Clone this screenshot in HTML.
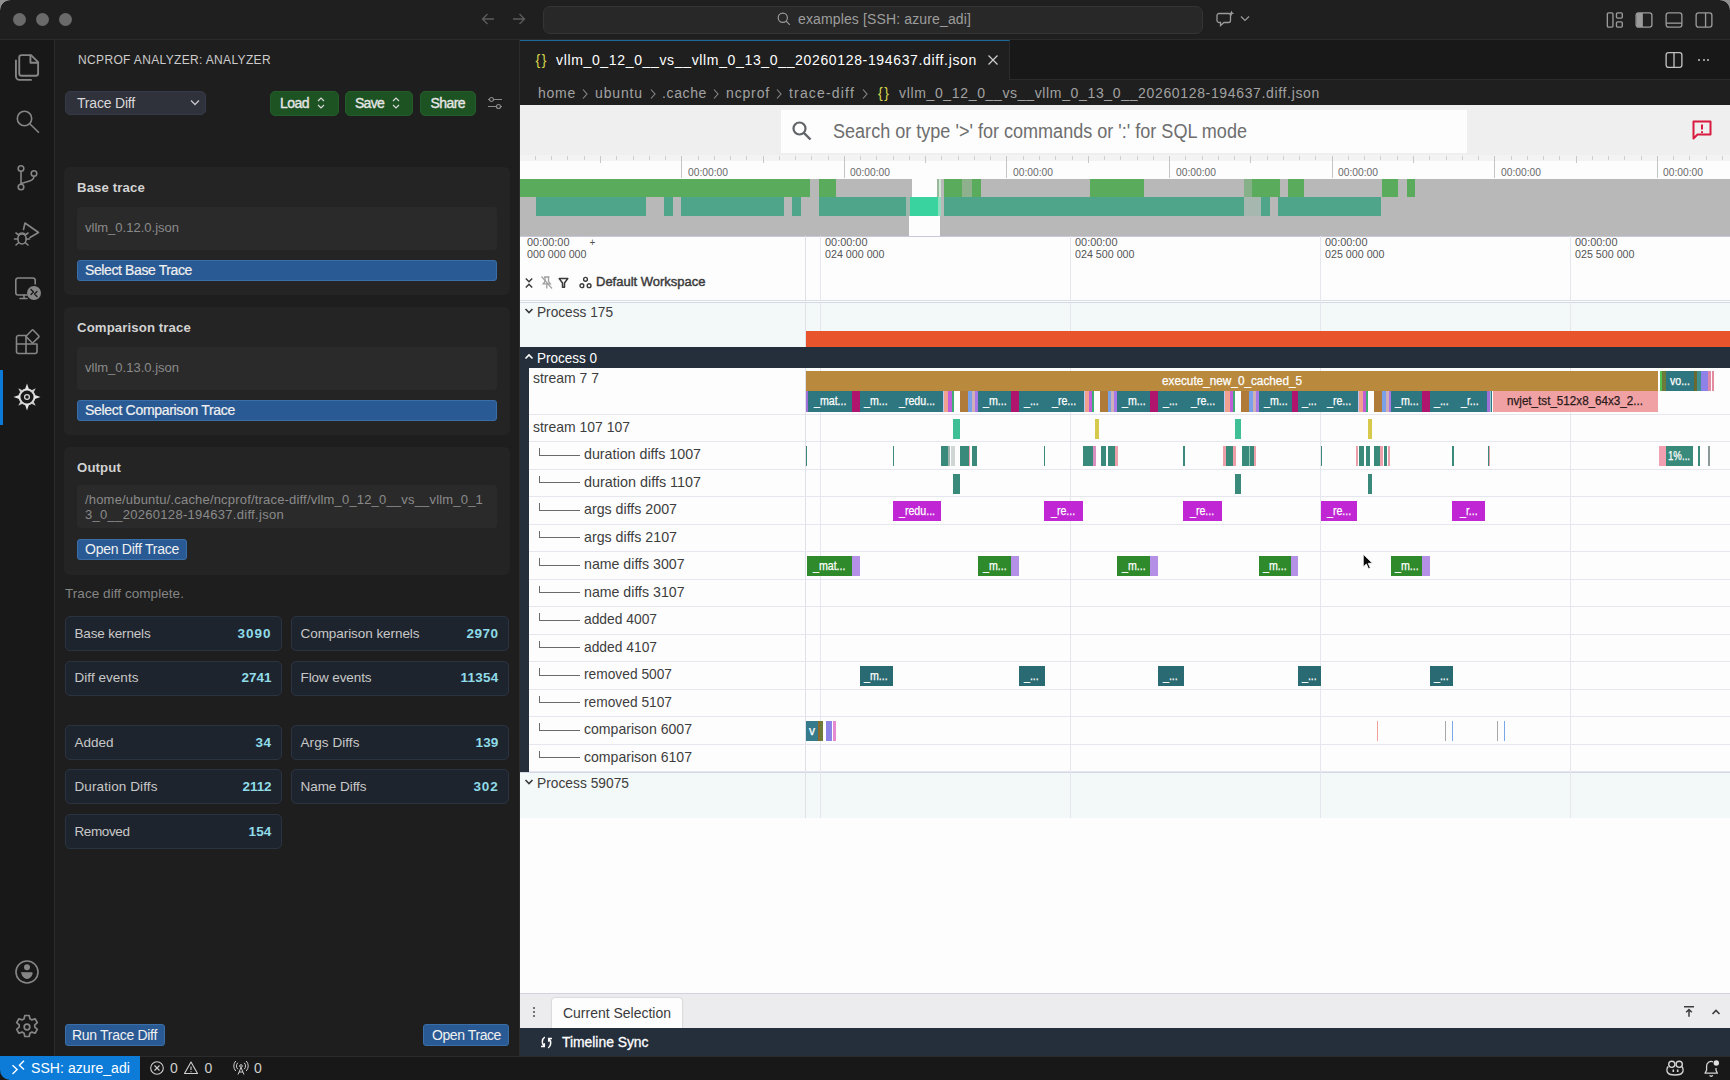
<!DOCTYPE html>
<html lang="en"><head><meta charset="utf-8"><title>ncprof analyzer - trace diff</title><style>
html,body{margin:0;padding:0}
body{width:1730px;height:1080px;overflow:hidden;position:relative;background:#1f1f1f;font-family:"Liberation Sans",sans-serif;}
.r{position:absolute;box-sizing:border-box}
.t{position:absolute;white-space:pre;display:block}
</style></head><body>
<div class="r " style="left:0px;top:0px;width:1730px;height:1080px;background:#1f1f1f;"></div>
<div class="r " style="left:0px;top:0px;width:1730px;height:40px;background:#1f1f1f;border-bottom:1px solid #2b2b2b;border-radius:10px 10px 0 0;"></div>
<div class="r" style="left:0;top:0;width:10px;height:10px;background:radial-gradient(circle at 10px 10px, rgba(0,0,0,0) 9.3px, #909090 10px)"></div>
<div class="r" style="left:1720px;top:0;width:10px;height:10px;background:radial-gradient(circle at 0px 10px, rgba(0,0,0,0) 9.3px, #909090 10px)"></div>
<div class="r " style="left:12.5px;top:12.5px;width:13px;height:13px;background:#6a6a6a;border-radius:50%"></div>
<div class="r " style="left:35.5px;top:12.5px;width:13px;height:13px;background:#6a6a6a;border-radius:50%"></div>
<div class="r " style="left:58.5px;top:12.5px;width:13px;height:13px;background:#6a6a6a;border-radius:50%"></div>
<svg class="r" style="left:480px;top:11px;" width="16" height="16" viewBox="0 0 16 16" fill="none"><path d="M14 8H2.5M7.5 3L2.5 8l5 5" stroke="#5c5c5c" stroke-width="1.3"/></svg>
<svg class="r" style="left:511px;top:11px;" width="16" height="16" viewBox="0 0 16 16" fill="none"><path d="M2 8h11.5M8.5 3l5 5-5 5" stroke="#5c5c5c" stroke-width="1.3"/></svg>
<div class="r " style="left:542.5px;top:6px;width:660px;height:27.5px;background:#282828;border:1px solid #343434;border-radius:7px"></div>
<svg class="r" style="left:776px;top:11px;" width="16" height="16" viewBox="0 0 16 16" fill="none"><circle cx="6.8" cy="6.8" r="4.6" stroke="#9a9a9a" stroke-width="1.2"/><path d="M10.2 10.2l3.6 3.6" stroke="#9a9a9a" stroke-width="1.2"/></svg>
<span class="t " style="top:12.45px;font-size:14px;line-height:14px;color:#9d9d9d;letter-spacing:0.134px;left:798.00px;">examples [SSH: azure_adi]</span>
<svg class="r" style="left:1216px;top:10px;" width="20" height="18" viewBox="0 0 20 18" fill="none"><path d="M3 3.5h9.5a2 2 0 0 1 2 2v5a2 2 0 0 1-2 2H8l-3.5 3v-3H3a2 2 0 0 1-2-2v-5a2 2 0 0 1 2-2z" stroke="#9a9a9a" stroke-width="1.3"/><path d="M15.5 0.5l.8 2 2 .8-2 .8-.8 2-.8-2-2-.8 2-.8z" fill="#9a9a9a"/></svg>
<svg class="r" style="left:1239px;top:15px;" width="12" height="8" viewBox="0 0 12 8" fill="none"><path d="M2 1.5l4 4 4-4" stroke="#9a9a9a" stroke-width="1.2"/></svg>
<svg class="r" style="left:1605.5px;top:10.5px;" width="18" height="18" viewBox="0 0 16 16" fill="none"><rect x="1.2" y="1.7" width="5" height="12.6" rx="1" stroke="#9a9a9a" stroke-width="1.2"/><rect x="9.3" y="1.7" width="5.2" height="4.6" rx="1" stroke="#9a9a9a" stroke-width="1.2"/><rect x="9.3" y="9.7" width="5.2" height="4.6" rx="1" stroke="#9a9a9a" stroke-width="1.2"/></svg>
<svg class="r" style="left:1635px;top:10.5px;" width="18" height="18" viewBox="0 0 16 16" fill="none"><rect x="1" y="1.7" width="14" height="12.6" rx="2" stroke="#9a9a9a" stroke-width="1.2"/><path d="M1.5 3.5a1.8 1.8 0 0 1 1.8-1.8H7v12.6H3.3a1.8 1.8 0 0 1-1.8-1.8z" fill="#9a9a9a"/></svg>
<svg class="r" style="left:1664.7px;top:10.5px;" width="18" height="18" viewBox="0 0 16 16" fill="none"><rect x="1" y="1.7" width="14" height="12.6" rx="2" stroke="#9a9a9a" stroke-width="1.2"/><path d="M1 10.800h14" stroke="#9a9a9a" stroke-width="1.2"/></svg>
<svg class="r" style="left:1694.5px;top:10.5px;" width="18" height="18" viewBox="0 0 16 16" fill="none"><rect x="1" y="1.7" width="14" height="12.6" rx="2" stroke="#9a9a9a" stroke-width="1.2"/><path d="M9.4 1.7v12.6" stroke="#9a9a9a" stroke-width="1.2"/></svg>
<div class="r " style="left:0px;top:40px;width:55px;height:1016px;background:#181818;border-right:1px solid #2b2b2b"></div>
<svg class="r" style="left:10.5px;top:50.5px" width="33" height="33" viewBox="0 0 28 28" fill="none" stroke="#868686" stroke-width="1.6" stroke-linecap="round" stroke-linejoin="round"><path d="M9 3.5h8l6 6V19a2 2 0 0 1-2 2H9a2 2 0 0 1-2-2V5.500a2 2 0 0 1 2-2z"/><path d="M16.500 3.800V10h6.200"/><path d="M4.200 8v13.500a3 3 0 0 0 3 3H17"/></svg>
<svg class="r" style="left:13.0px;top:108.0px" width="28" height="28" viewBox="0 0 28 28" fill="none" stroke="#868686" stroke-width="1.6" stroke-linecap="round" stroke-linejoin="round"><circle cx="11.500" cy="10.500" r="7.200"/><path d="M17 16l8.500 8.300"/></svg>
<svg class="r" style="left:13.0px;top:164.0px" width="28" height="28" viewBox="0 0 28 28" fill="none" stroke="#868686" stroke-width="1.6" stroke-linecap="round" stroke-linejoin="round"><circle cx="8" cy="4.500" r="2.800"/><circle cx="8" cy="23" r="2.800"/><circle cx="21" cy="9.500" r="2.800"/><path d="M8 7.300v12.900M21 12.300c0 5-6.500 5-12 7"/></svg>
<svg class="r" style="left:13.0px;top:220.0px" width="28" height="28" viewBox="0 0 28 28" fill="none" stroke="#868686" stroke-width="1.6" stroke-linecap="round" stroke-linejoin="round"><path d="M10.500 9.500L12 3l13.500 9.500-8.500 5"/><ellipse cx="9" cy="19" rx="4.200" ry="5"/><path d="M5.800 15.200L3 13M12.200 15.200L15 13M4.800 19H1.500M13.200 19h3.300M5.800 22.500L3 25M12.200 22.500L15 25M6 14.200c.8-1.600 5.200-1.600 6 0"/></svg>
<svg class="r" style="left:13.0px;top:275.0px" width="28" height="28" viewBox="0 0 28 28" fill="none" stroke="#868686" stroke-width="1.6" stroke-linecap="round" stroke-linejoin="round"><path d="M14 20H5a2.200 2.200 0 0 1-2.200-2.200V5.200A2.200 2.200 0 0 1 5 3h15a2.200 2.200 0 0 1 2.200 2.200V9"/><path d="M7 23.500h7M11 20v3.500"/></svg>
<div class="r " style="left:26.5px;top:286px;width:14px;height:14px;background:#868686;border-radius:50%"></div>
<svg class="r" style="left:26.5px;top:286px;" width="14" height="14" viewBox="0 0 14 14" fill="none"><path d="M4 3.500L6.500 6 4 8.500M10 5.500L7.500 8 10 10.500" stroke="#181818" stroke-width="1.3" stroke-linecap="round" stroke-linejoin="round"/></svg>
<svg class="r" style="left:13.0px;top:328.0px" width="28" height="28" viewBox="0 0 28 28" fill="none" stroke="#868686" stroke-width="1.6" stroke-linecap="round" stroke-linejoin="round"><path d="M13 7.500v18H5.500a2 2 0 0 1-2-2v-14a2 2 0 0 1 2-2H13zM3.500 16H24v7.500a2 2 0 0 1-2 2H13"/><path d="M20.300 2.300l5.400 5.400a1 1 0 0 1 0 1.400l-5.400 5.400a1 1 0 0 1-1.400 0L13.500 9.100a1 1 0 0 1 0-1.400l5.400-5.400a1 1 0 0 1 1.400 0z"/></svg>
<div class="r " style="left:0px;top:369.5px;width:3px;height:55px;background:#0a7ad6;"></div>
<svg class="r" style="left:13px;top:383px" width="28" height="28" viewBox="0 0 28 28" fill="none"><circle cx="14" cy="14" r="7.500" stroke="#d7d7d7" stroke-width="2"/><path d="M14 0.500l2.200 6.500h-4.400zM14 27.500l2.200-6.500h-4.400zM0.500 14l6.500-2.200v4.400zM27.500 14l-6.500-2.200v4.400z" fill="#e4e4e4"/><path d="M5.300 5.300l4.200 2-2.200 2.200zM22.700 5.300l-4.200 2 2.200 2.200zM5.300 22.700l4.200-2-2.200-2.200zM22.700 22.700l-4.200-2 2.200-2.200z" fill="#c8c8c8"/><circle cx="14" cy="14" r="2.400" stroke="#d7d7d7" stroke-width="1.300"/></svg>
<svg class="r" style="left:13.0px;top:958.0px" width="28" height="28" viewBox="0 0 28 28" fill="none" stroke="#868686" stroke-width="1.6" stroke-linecap="round" stroke-linejoin="round"><circle cx="14" cy="14" r="11"/><circle cx="14" cy="9.300" r="2.200" fill="#868686"/><path d="M8.800 14.800h10.400c-.5 7.600-9.900 7.600-10.400 0z" fill="#868686" stroke-width="1"/></svg>
<svg class="r" style="left:13px;top:1013px" width="28" height="28" viewBox="0 0 28 28" fill="none" stroke="#868686" stroke-width="1.7" stroke-linejoin="round"><circle cx="14" cy="14" r="2.800"/><path d="M11.800 2.500h4.400l.7 3.300 2 1.100 3.200-1.100 2.200 3.800-2.500 2.200v2.400l2.500 2.200-2.200 3.800-3.200-1.100-2 1.100-.7 3.300h-4.400l-.7-3.300-2-1.100-3.200 1.100-2.200-3.800 2.500-2.200v-2.400L3.700 9.600l2.200-3.800 3.200 1.100 2-1.100z"/></svg>
<div class="r " style="left:55px;top:40px;width:465px;height:1016px;background:#1e1e1e;border-right:1px solid #2b2b2b"></div>
<span class="t " style="top:54.04px;font-size:12px;line-height:12px;color:#cccccc;letter-spacing:0.349px;left:78.00px;">NCPROF ANALYZER: ANALYZER</span>
<div class="r " style="left:64.5px;top:90.5px;width:141px;height:24px;background:#2f313b;border:1px solid #363947;border-radius:5px"></div>
<span class="t " style="top:95.75px;font-size:14px;line-height:14px;color:#d8d8d8;letter-spacing:-0.191px;left:77.00px;">Trace Diff</span>
<svg class="r" style="left:189px;top:99px;" width="12" height="8" viewBox="0 0 12 8" fill="none"><path d="M2 1.500l4 4 4-4" stroke="#c8c8c8" stroke-width="1.300"/></svg>
<div class="r " style="left:270px;top:90.5px;width:68.5px;height:25.5px;background:#1d5222;border:1px solid #245d2a;border-radius:5px"></div>
<span class="t " style="top:95.95px;font-size:14px;line-height:14px;color:#e6e6e6;letter-spacing:-0.537px;left:280.00px;-webkit-text-stroke:0.35px #e6e6e6;">Load</span>
<svg class="r" style="left:316px;top:96px;" width="10" height="14" viewBox="0 0 10 14" fill="none"><path d="M2 5l3-3 3 3M2 9l3 3 3-3" stroke="#d8d8d8" stroke-width="1.200"/></svg>
<div class="r " style="left:345px;top:90.5px;width:68px;height:25.5px;background:#1d5222;border:1px solid #245d2a;border-radius:5px"></div>
<span class="t " style="top:95.95px;font-size:14px;line-height:14px;color:#e6e6e6;letter-spacing:-0.728px;left:355.00px;-webkit-text-stroke:0.35px #e6e6e6;">Save</span>
<svg class="r" style="left:391px;top:96px;" width="10" height="14" viewBox="0 0 10 14" fill="none"><path d="M2 5l3-3 3 3M2 9l3 3 3-3" stroke="#d8d8d8" stroke-width="1.200"/></svg>
<div class="r " style="left:420px;top:90.5px;width:56px;height:25.5px;background:#1d5222;border:1px solid #245d2a;border-radius:5px"></div>
<span class="t " style="top:95.95px;font-size:14px;line-height:14px;color:#e6e6e6;letter-spacing:-0.572px;left:430.50px;-webkit-text-stroke:0.35px #e6e6e6;">Share</span>
<svg class="r" style="left:487px;top:95px;" width="16" height="16" viewBox="0 0 16 16" fill="none"><circle cx="4.500" cy="4.500" r="2" stroke="#8a8a8a" stroke-width="1.200"/><path d="M6.500 4.500H15M1 11.500h8" stroke="#8a8a8a" stroke-width="1.200"/><circle cx="11.500" cy="11.500" r="2" stroke="#8a8a8a" stroke-width="1.200"/><path d="M13.500 11.500H15M1 4.500h1.500" stroke="#8a8a8a" stroke-width="1.200"/></svg>
<div class="r " style="left:64px;top:167px;width:446px;height:128px;background:#242424;border-radius:6px"></div>
<span class="t " style="top:181.33px;font-size:13.2px;line-height:13.2px;color:#d2d2d2;font-weight:700;letter-spacing:0.123px;left:77.00px;">Base trace</span>
<div class="r " style="left:77px;top:207px;width:420px;height:43px;background:#2a2a2a;border-radius:4px"></div>
<span class="t " style="top:221.00px;font-size:13px;line-height:13px;color:#8a8a8a;letter-spacing:0.004px;left:85.00px;">vllm_0.12.0.json</span>
<div class="r " style="left:77px;top:260px;width:420px;height:21px;background:#2a5a94;border:1px solid #3a6ea8;border-radius:3px"></div>
<span class="t " style="top:263.15px;font-size:14px;line-height:14px;color:#f0f0f0;letter-spacing:-0.390px;left:85.00px;-webkit-text-stroke:0.2px #f0f0f0;">Select Base Trace</span>
<div class="r " style="left:64px;top:307px;width:446px;height:128px;background:#242424;border-radius:6px"></div>
<span class="t " style="top:321.33px;font-size:13.2px;line-height:13.2px;color:#d2d2d2;font-weight:700;letter-spacing:0.111px;left:77.00px;">Comparison trace</span>
<div class="r " style="left:77px;top:347px;width:420px;height:43px;background:#2a2a2a;border-radius:4px"></div>
<span class="t " style="top:361.00px;font-size:13px;line-height:13px;color:#8a8a8a;letter-spacing:0.004px;left:85.00px;">vllm_0.13.0.json</span>
<div class="r " style="left:77px;top:400px;width:420px;height:21px;background:#2a5a94;border:1px solid #3a6ea8;border-radius:3px"></div>
<span class="t " style="top:403.15px;font-size:14px;line-height:14px;color:#f0f0f0;letter-spacing:-0.313px;left:85.00px;-webkit-text-stroke:0.2px #f0f0f0;">Select Comparison Trace</span>
<div class="r " style="left:64px;top:446.5px;width:446px;height:128px;background:#242424;border-radius:6px"></div>
<span class="t " style="top:460.83px;font-size:13.2px;line-height:13.2px;color:#d2d2d2;font-weight:700;letter-spacing:0.126px;left:77.00px;">Output</span>
<div class="r " style="left:77px;top:485px;width:420px;height:43px;background:#2a2a2a;border-radius:4px"></div>
<span class="t " style="top:492.50px;font-size:13px;line-height:13px;color:#8a8a8a;letter-spacing:0.184px;left:85.00px;">/home/ubuntu/.cache/ncprof/trace-diff/vllm_0_12_0__vs__vllm_0_1</span>
<span class="t " style="top:507.50px;font-size:13px;line-height:13px;color:#8a8a8a;letter-spacing:0.304px;left:85.00px;">3_0__20260128-194637.diff.json</span>
<div class="r " style="left:77px;top:539px;width:110px;height:21px;background:#2a5a94;border:1px solid #3a6ea8;border-radius:3px"></div>
<span class="t " style="top:542.15px;font-size:14px;line-height:14px;color:#f0f0f0;letter-spacing:-0.254px;left:85.00px;">Open Diff Trace</span>
<span class="t " style="top:587.07px;font-size:13.5px;line-height:13.5px;color:#858585;letter-spacing:0.060px;left:65.00px;">Trace diff complete.</span>
<div class="r " style="left:65px;top:616px;width:217px;height:35px;background:#1e242d;border:1px solid #2a3441;border-radius:5px"></div>
<span class="t " style="top:626.57px;font-size:13.5px;line-height:13.5px;color:#c8c8c8;letter-spacing:-0.170px;left:74.50px;">Base kernels</span>
<span class="t " style="top:626.57px;font-size:13.5px;line-height:13.5px;color:#8fdbe8;font-weight:700;letter-spacing:0.992px;left:237.50px;">3090</span>
<div class="r " style="left:291px;top:616px;width:218px;height:35px;background:#1e242d;border:1px solid #2a3441;border-radius:5px"></div>
<span class="t " style="top:626.57px;font-size:13.5px;line-height:13.5px;color:#c8c8c8;letter-spacing:-0.058px;left:300.50px;">Comparison kernels</span>
<span class="t " style="top:626.57px;font-size:13.5px;line-height:13.5px;color:#8fdbe8;font-weight:700;letter-spacing:0.492px;left:466.50px;">2970</span>
<div class="r " style="left:65px;top:660.5px;width:217px;height:35px;background:#1e242d;border:1px solid #2a3441;border-radius:5px"></div>
<span class="t " style="top:671.07px;font-size:13.5px;line-height:13.5px;color:#c8c8c8;letter-spacing:0.043px;left:74.50px;">Diff events</span>
<span class="t " style="top:671.07px;font-size:13.5px;line-height:13.5px;color:#8fdbe8;font-weight:700;letter-spacing:-0.008px;left:241.50px;">2741</span>
<div class="r " style="left:291px;top:660.5px;width:218px;height:35px;background:#1e242d;border:1px solid #2a3441;border-radius:5px"></div>
<span class="t " style="top:671.07px;font-size:13.5px;line-height:13.5px;color:#c8c8c8;letter-spacing:-0.093px;left:300.50px;">Flow events</span>
<span class="t " style="top:671.07px;font-size:13.5px;line-height:13.5px;color:#8fdbe8;font-weight:700;letter-spacing:0.241px;left:460.50px;">11354</span>
<div class="r " style="left:65px;top:725px;width:217px;height:35px;background:#1e242d;border:1px solid #2a3441;border-radius:5px"></div>
<span class="t " style="top:735.57px;font-size:13.5px;line-height:13.5px;color:#c8c8c8;letter-spacing:-0.007px;left:74.50px;">Added</span>
<span class="t " style="top:735.57px;font-size:13.5px;line-height:13.5px;color:#8fdbe8;font-weight:700;letter-spacing:0.492px;left:255.50px;">34</span>
<div class="r " style="left:291px;top:725px;width:218px;height:35px;background:#1e242d;border:1px solid #2a3441;border-radius:5px"></div>
<span class="t " style="top:735.57px;font-size:13.5px;line-height:13.5px;color:#c8c8c8;letter-spacing:0.074px;left:300.50px;">Args Diffs</span>
<span class="t " style="top:735.57px;font-size:13.5px;line-height:13.5px;color:#8fdbe8;font-weight:700;letter-spacing:0.159px;left:475.50px;">139</span>
<div class="r " style="left:65px;top:769.3px;width:217px;height:35px;background:#1e242d;border:1px solid #2a3441;border-radius:5px"></div>
<span class="t " style="top:779.87px;font-size:13.5px;line-height:13.5px;color:#c8c8c8;letter-spacing:0.105px;left:74.50px;">Duration Diffs</span>
<span class="t " style="top:779.87px;font-size:13.5px;line-height:13.5px;color:#8fdbe8;font-weight:700;letter-spacing:-0.072px;left:242.50px;">2112</span>
<div class="r " style="left:291px;top:769.3px;width:218px;height:35px;background:#1e242d;border:1px solid #2a3441;border-radius:5px"></div>
<span class="t " style="top:779.87px;font-size:13.5px;line-height:13.5px;color:#c8c8c8;letter-spacing:-0.052px;left:300.50px;">Name Diffs</span>
<span class="t " style="top:779.87px;font-size:13.5px;line-height:13.5px;color:#8fdbe8;font-weight:700;letter-spacing:0.826px;left:473.50px;">302</span>
<div class="r " style="left:65px;top:814px;width:217px;height:35px;background:#1e242d;border:1px solid #2a3441;border-radius:5px"></div>
<span class="t " style="top:824.57px;font-size:13.5px;line-height:13.5px;color:#c8c8c8;letter-spacing:-0.397px;left:74.50px;">Removed</span>
<span class="t " style="top:824.57px;font-size:13.5px;line-height:13.5px;color:#8fdbe8;font-weight:700;letter-spacing:0.159px;left:248.50px;">154</span>
<div class="r " style="left:65px;top:1024px;width:100px;height:22px;background:#2a5a94;border:1px solid #3a6ea8;border-radius:3px"></div>
<span class="t " style="top:1027.65px;font-size:14px;line-height:14px;color:#f0f0f0;letter-spacing:-0.303px;left:72.00px;">Run Trace Diff</span>
<div class="r " style="left:423px;top:1024px;width:86px;height:22px;background:#2a5a94;border:1px solid #3a6ea8;border-radius:3px"></div>
<span class="t " style="top:1027.65px;font-size:14px;line-height:14px;color:#f0f0f0;letter-spacing:-0.416px;left:432.00px;">Open Trace</span>
<div class="r " style="left:520px;top:40px;width:1210px;height:40px;background:#181818;border-bottom:1px solid #2b2b2b"></div>
<div class="r " style="left:520px;top:40px;width:490px;height:39.5px;background:#1f1f1f;border-top:1.5px solid #1b6a9f;border-right:1px solid #2b2b2b"></div>
<span class="t " style="top:52.95px;font-size:14px;line-height:14px;color:#d6d64a;letter-spacing:1.574px;left:535.50px;">{}</span>
<span class="t " style="top:53.15px;font-size:14px;line-height:14px;color:#ffffff;letter-spacing:0.653px;left:556.00px;">vllm_0_12_0__vs__vllm_0_13_0__20260128-194637.diff.json</span>
<svg class="r" style="left:987px;top:54px;" width="12" height="12" viewBox="0 0 12 12" fill="none"><path d="M1.500 1.500l9 9M10.500 1.500l-9 9" stroke="#d0d0d0" stroke-width="1.200"/></svg>
<svg class="r" style="left:1665px;top:51px;" width="18" height="18" viewBox="0 0 16 16" fill="none"><rect x="1" y="1.500" width="14" height="13" rx="2" stroke="#c0c0c0" stroke-width="1.200"/><path d="M8 1.500v13" stroke="#c0c0c0" stroke-width="1.200"/></svg>
<div class="r " style="left:1698.0px;top:59px;width:2.2px;height:2.2px;background:#c0c0c0;border-radius:50%"></div>
<div class="r " style="left:1702.5px;top:59px;width:2.2px;height:2.2px;background:#c0c0c0;border-radius:50%"></div>
<div class="r " style="left:1707.0px;top:59px;width:2.2px;height:2.2px;background:#c0c0c0;border-radius:50%"></div>
<div class="r " style="left:520px;top:80px;width:1210px;height:25px;background:#1f1f1f;"></div>
<span class="t " style="top:85.65px;font-size:14px;line-height:14px;color:#a2a2a2;letter-spacing:0.744px;left:538.00px;">home</span>
<span class="t " style="top:85.65px;font-size:14px;line-height:14px;color:#a2a2a2;letter-spacing:0.862px;left:595.00px;">ubuntu</span>
<span class="t " style="top:85.65px;font-size:14px;line-height:14px;color:#a2a2a2;letter-spacing:0.625px;left:662.00px;">.cache</span>
<span class="t " style="top:85.65px;font-size:14px;line-height:14px;color:#a2a2a2;letter-spacing:0.848px;left:726.00px;">ncprof</span>
<span class="t " style="top:85.65px;font-size:14px;line-height:14px;color:#a2a2a2;letter-spacing:1.178px;left:789.00px;">trace-diff</span>
<svg class="r" style="left:581px;top:87.5px;" width="8" height="12" viewBox="0 0 8 12" fill="none"><path d="M2 1.500l4 4.500-4 4.500" stroke="#8a8a8a" stroke-width="1.100"/></svg>
<svg class="r" style="left:649px;top:87.5px;" width="8" height="12" viewBox="0 0 8 12" fill="none"><path d="M2 1.500l4 4.500-4 4.500" stroke="#8a8a8a" stroke-width="1.100"/></svg>
<svg class="r" style="left:712px;top:87.5px;" width="8" height="12" viewBox="0 0 8 12" fill="none"><path d="M2 1.500l4 4.500-4 4.500" stroke="#8a8a8a" stroke-width="1.100"/></svg>
<svg class="r" style="left:775px;top:87.5px;" width="8" height="12" viewBox="0 0 8 12" fill="none"><path d="M2 1.500l4 4.500-4 4.500" stroke="#8a8a8a" stroke-width="1.100"/></svg>
<svg class="r" style="left:861px;top:87.5px;" width="8" height="12" viewBox="0 0 8 12" fill="none"><path d="M2 1.500l4 4.500-4 4.500" stroke="#8a8a8a" stroke-width="1.100"/></svg>
<span class="t " style="top:85.75px;font-size:14px;line-height:14px;color:#d6d64a;letter-spacing:1.574px;left:878.00px;">{}</span>
<span class="t " style="top:85.65px;font-size:14px;line-height:14px;color:#a2a2a2;letter-spacing:0.653px;left:899.00px;">vllm_0_12_0__vs__vllm_0_13_0__20260128-194637.diff.json</span>
<div class="r " style="left:0px;top:1056px;width:1730px;height:24px;background:#181818;border-top:1px solid #2b2b2b"></div>
<div class="r " style="left:0px;top:1056px;width:140px;height:24px;background:#0c7cd8;border-radius:0 0 0 10px"></div>
<svg class="r" style="left:10px;top:1058px;" width="16" height="18" viewBox="0 0 16 18" fill="none"><path d="M2.500 7.200l4.600 4.400-4.600 4.400M14 2.800L9.400 7.200l4.600 4.400" stroke="#ffffff" stroke-width="1.400"/></svg>
<span class="t " style="top:1060.65px;font-size:14px;line-height:14px;color:#ffffff;letter-spacing:0.067px;left:31.00px;">SSH: azure_adi</span>
<svg class="r" style="left:149px;top:1060px;" width="16" height="16" viewBox="0 0 16 16" fill="none"><circle cx="8" cy="8" r="6.300" stroke="#cfcfcf" stroke-width="1.100"/><path d="M5.500 5.500l5 5M10.500 5.500l-5 5" stroke="#cfcfcf" stroke-width="1.100"/></svg>
<span class="t " style="top:1060.65px;font-size:14px;line-height:14px;color:#cfcfcf;left:170.00px;">0</span>
<svg class="r" style="left:183px;top:1060px;" width="16" height="16" viewBox="0 0 16 16" fill="none"><path d="M8 2L14.500 13.500h-13z" stroke="#cfcfcf" stroke-width="1.100" stroke-linejoin="round"/><path d="M8 6.500v3.500M8 11.300v.9" stroke="#cfcfcf" stroke-width="1.100"/></svg>
<span class="t " style="top:1060.65px;font-size:14px;line-height:14px;color:#cfcfcf;left:204.50px;">0</span>
<svg class="r" style="left:233px;top:1060px;" width="16" height="16" viewBox="0 0 16 16" fill="none"><circle cx="8" cy="6" r="1.300" stroke="#cfcfcf" stroke-width="1"/><path d="M8 7.500L5 14.500M8 7.500l3 7M6 12h4M4.800 9.200a4.500 4.500 0 0 1 0-6.400M11.200 9.200a4.500 4.500 0 0 0 0-6.400M2.800 11a7.200 7.200 0 0 1 0-10M13.200 11a7.200 7.200 0 0 0 0-10" stroke="#cfcfcf" stroke-width="1"/></svg>
<span class="t " style="top:1060.65px;font-size:14px;line-height:14px;color:#cfcfcf;left:254.00px;">0</span>
<svg class="r" style="left:1665.5px;top:1058.5px;" width="19" height="19" viewBox="0 0 19 19" fill="none"><circle cx="5.800" cy="5.300" r="3.100" stroke="#d4d4d4" stroke-width="1.400"/><circle cx="13.200" cy="5.300" r="3.100" stroke="#d4d4d4" stroke-width="1.400"/><path d="M2.200 7.500C0.600 9.500 0.600 12.500 2 14c2 2.600 12 2.600 14 0 1.400-1.500 1.400-4.500-.2-6.500" stroke="#d4d4d4" stroke-width="1.500"/><path d="M7.300 10.500v2.400M11.700 10.500v2.400" stroke="#d4d4d4" stroke-width="1.600"/></svg>
<svg class="r" style="left:1702px;top:1058.5px;" width="18" height="19" viewBox="0 0 18 19" fill="none"><path d="M11 2.800A4.600 4.600 0 0 0 4.600 7.300v4L3 14.200h12.400L14 11.300V9" stroke="#d4d4d4" stroke-width="1.300" stroke-linejoin="round"/><path d="M7.700 16.200a1.600 1.600 0 0 0 3 0" stroke="#d4d4d4" stroke-width="1.300"/><circle cx="14.300" cy="4" r="2.700" fill="#e0e0e0"/></svg>
<div class="r " style="left:520px;top:105px;width:1210px;height:951px;background:#fdfdfe;"></div>
<div class="r " style="left:520px;top:105px;width:1210px;height:50px;background:#efefef;"></div>
<div class="r " style="left:781px;top:110px;width:686px;height:42.5px;background:#fdfdfd;"></div>
<svg class="r" style="left:790px;top:119px;" width="24" height="24" viewBox="0 0 24 24" fill="none"><circle cx="9.500" cy="9.500" r="6" stroke="#5f6368" stroke-width="2.200"/><path d="M14 14l6.500 6.500" stroke="#5f6368" stroke-width="2.400"/></svg>
<span class="t " style="top:121.07px;font-size:20px;line-height:20px;color:#6e6e6e;transform:scaleX(0.9027);left:833.00px;transform-origin:0 0;">Search or type &#x27;&gt;&#x27; for commands or &#x27;:&#x27; for SQL mode</span>
<svg class="r" style="left:1691px;top:119px;" width="22" height="22" viewBox="0 0 22 22" fill="none"><path d="M2.500 2.500h17v13h-13l-4 4z" stroke="#d81b3f" stroke-width="2" stroke-linejoin="round"/><path d="M11 5.500v5M11 12.300v1.700" stroke="#d81b3f" stroke-width="2"/></svg>
<div class="r " style="left:520px;top:155px;width:1210px;height:24px;background:#fdfdfe;"></div>
<div class="r " style="left:520px;top:155px;width:1210px;height:6px;background:#f3f3f4;"></div>
<div class="r " style="left:535px;top:156px;width:1px;height:4px;background:#d0d0d0;"></div>
<div class="r " style="left:551px;top:156px;width:1px;height:4px;background:#d0d0d0;"></div>
<div class="r " style="left:567px;top:156px;width:1px;height:4px;background:#d0d0d0;"></div>
<div class="r " style="left:584px;top:156px;width:1px;height:4px;background:#d0d0d0;"></div>
<div class="r " style="left:600px;top:156px;width:1px;height:7px;background:#c8c8c8;"></div>
<div class="r " style="left:616px;top:156px;width:1px;height:4px;background:#d0d0d0;"></div>
<div class="r " style="left:633px;top:156px;width:1px;height:4px;background:#d0d0d0;"></div>
<div class="r " style="left:649px;top:156px;width:1px;height:4px;background:#d0d0d0;"></div>
<div class="r " style="left:665px;top:156px;width:1px;height:4px;background:#d0d0d0;"></div>
<div class="r " style="left:681px;top:156px;width:1px;height:22px;background:#c4c4c4;"></div>
<div class="r " style="left:698px;top:156px;width:1px;height:4px;background:#d0d0d0;"></div>
<div class="r " style="left:714px;top:156px;width:1px;height:4px;background:#d0d0d0;"></div>
<div class="r " style="left:730px;top:156px;width:1px;height:4px;background:#d0d0d0;"></div>
<div class="r " style="left:746px;top:156px;width:1px;height:4px;background:#d0d0d0;"></div>
<div class="r " style="left:763px;top:156px;width:1px;height:7px;background:#c8c8c8;"></div>
<div class="r " style="left:779px;top:156px;width:1px;height:4px;background:#d0d0d0;"></div>
<div class="r " style="left:795px;top:156px;width:1px;height:4px;background:#d0d0d0;"></div>
<div class="r " style="left:811px;top:156px;width:1px;height:4px;background:#d0d0d0;"></div>
<div class="r " style="left:828px;top:156px;width:1px;height:4px;background:#d0d0d0;"></div>
<div class="r " style="left:844px;top:156px;width:1px;height:22px;background:#c4c4c4;"></div>
<div class="r " style="left:860px;top:156px;width:1px;height:4px;background:#d0d0d0;"></div>
<div class="r " style="left:876px;top:156px;width:1px;height:4px;background:#d0d0d0;"></div>
<div class="r " style="left:893px;top:156px;width:1px;height:4px;background:#d0d0d0;"></div>
<div class="r " style="left:909px;top:156px;width:1px;height:4px;background:#d0d0d0;"></div>
<div class="r " style="left:925px;top:156px;width:1px;height:7px;background:#c8c8c8;"></div>
<div class="r " style="left:941px;top:156px;width:1px;height:4px;background:#d0d0d0;"></div>
<div class="r " style="left:958px;top:156px;width:1px;height:4px;background:#d0d0d0;"></div>
<div class="r " style="left:974px;top:156px;width:1px;height:4px;background:#d0d0d0;"></div>
<div class="r " style="left:990px;top:156px;width:1px;height:4px;background:#d0d0d0;"></div>
<div class="r " style="left:1006px;top:156px;width:1px;height:22px;background:#c4c4c4;"></div>
<div class="r " style="left:1023px;top:156px;width:1px;height:4px;background:#d0d0d0;"></div>
<div class="r " style="left:1039px;top:156px;width:1px;height:4px;background:#d0d0d0;"></div>
<div class="r " style="left:1055px;top:156px;width:1px;height:4px;background:#d0d0d0;"></div>
<div class="r " style="left:1072px;top:156px;width:1px;height:4px;background:#d0d0d0;"></div>
<div class="r " style="left:1088px;top:156px;width:1px;height:7px;background:#c8c8c8;"></div>
<div class="r " style="left:1104px;top:156px;width:1px;height:4px;background:#d0d0d0;"></div>
<div class="r " style="left:1120px;top:156px;width:1px;height:4px;background:#d0d0d0;"></div>
<div class="r " style="left:1137px;top:156px;width:1px;height:4px;background:#d0d0d0;"></div>
<div class="r " style="left:1153px;top:156px;width:1px;height:4px;background:#d0d0d0;"></div>
<div class="r " style="left:1169px;top:156px;width:1px;height:22px;background:#c4c4c4;"></div>
<div class="r " style="left:1185px;top:156px;width:1px;height:4px;background:#d0d0d0;"></div>
<div class="r " style="left:1202px;top:156px;width:1px;height:4px;background:#d0d0d0;"></div>
<div class="r " style="left:1218px;top:156px;width:1px;height:4px;background:#d0d0d0;"></div>
<div class="r " style="left:1234px;top:156px;width:1px;height:4px;background:#d0d0d0;"></div>
<div class="r " style="left:1250px;top:156px;width:1px;height:7px;background:#c8c8c8;"></div>
<div class="r " style="left:1267px;top:156px;width:1px;height:4px;background:#d0d0d0;"></div>
<div class="r " style="left:1283px;top:156px;width:1px;height:4px;background:#d0d0d0;"></div>
<div class="r " style="left:1299px;top:156px;width:1px;height:4px;background:#d0d0d0;"></div>
<div class="r " style="left:1315px;top:156px;width:1px;height:4px;background:#d0d0d0;"></div>
<div class="r " style="left:1332px;top:156px;width:1px;height:22px;background:#c4c4c4;"></div>
<div class="r " style="left:1348px;top:156px;width:1px;height:4px;background:#d0d0d0;"></div>
<div class="r " style="left:1364px;top:156px;width:1px;height:4px;background:#d0d0d0;"></div>
<div class="r " style="left:1380px;top:156px;width:1px;height:4px;background:#d0d0d0;"></div>
<div class="r " style="left:1397px;top:156px;width:1px;height:4px;background:#d0d0d0;"></div>
<div class="r " style="left:1413px;top:156px;width:1px;height:7px;background:#c8c8c8;"></div>
<div class="r " style="left:1429px;top:156px;width:1px;height:4px;background:#d0d0d0;"></div>
<div class="r " style="left:1446px;top:156px;width:1px;height:4px;background:#d0d0d0;"></div>
<div class="r " style="left:1462px;top:156px;width:1px;height:4px;background:#d0d0d0;"></div>
<div class="r " style="left:1478px;top:156px;width:1px;height:4px;background:#d0d0d0;"></div>
<div class="r " style="left:1494px;top:156px;width:1px;height:22px;background:#c4c4c4;"></div>
<div class="r " style="left:1511px;top:156px;width:1px;height:4px;background:#d0d0d0;"></div>
<div class="r " style="left:1527px;top:156px;width:1px;height:4px;background:#d0d0d0;"></div>
<div class="r " style="left:1543px;top:156px;width:1px;height:4px;background:#d0d0d0;"></div>
<div class="r " style="left:1559px;top:156px;width:1px;height:4px;background:#d0d0d0;"></div>
<div class="r " style="left:1576px;top:156px;width:1px;height:7px;background:#c8c8c8;"></div>
<div class="r " style="left:1592px;top:156px;width:1px;height:4px;background:#d0d0d0;"></div>
<div class="r " style="left:1608px;top:156px;width:1px;height:4px;background:#d0d0d0;"></div>
<div class="r " style="left:1624px;top:156px;width:1px;height:4px;background:#d0d0d0;"></div>
<div class="r " style="left:1641px;top:156px;width:1px;height:4px;background:#d0d0d0;"></div>
<div class="r " style="left:1657px;top:156px;width:1px;height:22px;background:#c4c4c4;"></div>
<div class="r " style="left:1673px;top:156px;width:1px;height:4px;background:#d0d0d0;"></div>
<div class="r " style="left:1689px;top:156px;width:1px;height:4px;background:#d0d0d0;"></div>
<div class="r " style="left:1706px;top:156px;width:1px;height:4px;background:#d0d0d0;"></div>
<div class="r " style="left:1722px;top:156px;width:1px;height:4px;background:#d0d0d0;"></div>
<span class="t " style="top:167.11px;font-size:10.5px;line-height:10.5px;color:#6a6a6a;transform:scaleX(0.9786);left:687.80px;transform-origin:0 0;">00:00:00</span>
<span class="t " style="top:167.11px;font-size:10.5px;line-height:10.5px;color:#6a6a6a;transform:scaleX(0.9786);left:850.40px;transform-origin:0 0;">00:00:00</span>
<span class="t " style="top:167.11px;font-size:10.5px;line-height:10.5px;color:#6a6a6a;transform:scaleX(0.9786);left:1013.00px;transform-origin:0 0;">00:00:00</span>
<span class="t " style="top:167.11px;font-size:10.5px;line-height:10.5px;color:#6a6a6a;transform:scaleX(0.9786);left:1175.60px;transform-origin:0 0;">00:00:00</span>
<span class="t " style="top:167.11px;font-size:10.5px;line-height:10.5px;color:#6a6a6a;transform:scaleX(0.9786);left:1338.20px;transform-origin:0 0;">00:00:00</span>
<span class="t " style="top:167.11px;font-size:10.5px;line-height:10.5px;color:#6a6a6a;transform:scaleX(0.9786);left:1500.80px;transform-origin:0 0;">00:00:00</span>
<span class="t " style="top:167.11px;font-size:10.5px;line-height:10.5px;color:#6a6a6a;transform:scaleX(0.9786);left:1663.40px;transform-origin:0 0;">00:00:00</span>
<div class="r " style="left:520px;top:178.5px;width:1210px;height:57.5px;background:#b8b8b8;"></div>
<div class="r " style="left:520px;top:178.5px;width:290px;height:18.3px;background:#5aab5c;"></div>
<div class="r " style="left:819px;top:178.5px;width:16.5px;height:18.3px;background:#5aab5c;"></div>
<div class="r " style="left:944px;top:178.5px;width:18px;height:18.3px;background:#5aab5c;"></div>
<div class="r " style="left:972px;top:178.5px;width:9px;height:18.3px;background:#5aab5c;"></div>
<div class="r " style="left:1090px;top:178.5px;width:53.5px;height:18.3px;background:#5aab5c;"></div>
<div class="r " style="left:1252px;top:178.5px;width:27.5px;height:18.3px;background:#5aab5c;"></div>
<div class="r " style="left:1288px;top:178.5px;width:15.5px;height:18.3px;background:#5aab5c;"></div>
<div class="r " style="left:1381.7px;top:178.5px;width:16.299999999999955px;height:18.3px;background:#5aab5c;"></div>
<div class="r " style="left:1406.7px;top:178.5px;width:8.799999999999955px;height:18.3px;background:#5aab5c;"></div>
<div class="r " style="left:962px;top:178.5px;width:10px;height:18.3px;background:#8fb08c;"></div>
<div class="r " style="left:1244px;top:178.5px;width:8px;height:18.3px;background:#86b088;"></div>
<div class="r " style="left:536px;top:196.8px;width:110px;height:19.2px;background:#4fa58a;"></div>
<div class="r " style="left:664px;top:196.8px;width:8.5px;height:19.2px;background:#4fa58a;"></div>
<div class="r " style="left:681px;top:196.8px;width:102.5px;height:19.2px;background:#4fa58a;"></div>
<div class="r " style="left:792px;top:196.8px;width:9px;height:19.2px;background:#4fa58a;"></div>
<div class="r " style="left:818.5px;top:196.8px;width:90.5px;height:19.2px;background:#4fa58a;"></div>
<div class="r " style="left:944px;top:196.8px;width:300px;height:19.2px;background:#4fa58a;"></div>
<div class="r " style="left:1261px;top:196.8px;width:9px;height:19.2px;background:#4fa58a;"></div>
<div class="r " style="left:1278px;top:196.8px;width:103px;height:19.2px;background:#4fa58a;"></div>
<div class="r " style="left:1244px;top:196.8px;width:17px;height:19.2px;background:#a5b7ae;"></div>
<div class="r " style="left:909px;top:178.5px;width:31px;height:57.5px;background:#fdfdfe;"></div>
<div class="r " style="left:909px;top:178.5px;width:3px;height:18.3px;background:#b8b8b8;"></div>
<div class="r " style="left:906.3px;top:196.8px;width:3.7px;height:19.2px;background:#9fb8ae;"></div>
<div class="r " style="left:910px;top:196.8px;width:27.5px;height:19.2px;background:#38d39f;"></div>
<div class="r " style="left:937.5px;top:196.8px;width:3.5px;height:19.2px;background:#8fdcc0;"></div>
<div class="r " style="left:936.7px;top:178.5px;width:2.3px;height:18.3px;background:#9ab89a;"></div>
<div class="r " style="left:939px;top:178.5px;width:2px;height:18.3px;background:#cfe8d4;"></div>
<div class="r " style="left:941px;top:178.5px;width:3px;height:57.5px;background:#b8b8b8;"></div>
<div class="r " style="left:940px;top:216px;width:1px;height:20px;background:#b8b8b8;"></div>
<div class="r " style="left:520px;top:236px;width:1210px;height:65px;background:#fdfdfe;border-bottom:1px solid #d9dbe6"></div>
<div class="r " style="left:520px;top:235.5px;width:1210px;height:1px;background:#c8c8d8;"></div>
<span class="t " style="top:237.46px;font-size:10.8px;line-height:10.8px;color:#545454;transform:scaleX(1.0111);left:526.50px;transform-origin:0 0;">00:00:00</span>
<span class="t " style="top:248.86px;font-size:10.8px;line-height:10.8px;color:#545454;transform:scaleX(0.9908);left:526.50px;transform-origin:0 0;">000 000 000</span>
<span class="t " style="top:238.03px;font-size:10px;line-height:10px;color:#545454;left:589.50px;">+</span>
<span class="t " style="top:237.46px;font-size:10.8px;line-height:10.8px;color:#545454;transform:scaleX(1.0111);left:825.00px;transform-origin:0 0;">00:00:00</span>
<span class="t " style="top:248.86px;font-size:10.8px;line-height:10.8px;color:#545454;transform:scaleX(0.9908);left:825.00px;transform-origin:0 0;">024 000 000</span>
<span class="t " style="top:237.46px;font-size:10.8px;line-height:10.8px;color:#545454;transform:scaleX(1.0111);left:1075.00px;transform-origin:0 0;">00:00:00</span>
<span class="t " style="top:248.86px;font-size:10.8px;line-height:10.8px;color:#545454;transform:scaleX(0.9908);left:1075.00px;transform-origin:0 0;">024 500 000</span>
<span class="t " style="top:237.46px;font-size:10.8px;line-height:10.8px;color:#545454;transform:scaleX(1.0111);left:1325.00px;transform-origin:0 0;">00:00:00</span>
<span class="t " style="top:248.86px;font-size:10.8px;line-height:10.8px;color:#545454;transform:scaleX(0.9908);left:1325.00px;transform-origin:0 0;">025 000 000</span>
<span class="t " style="top:237.46px;font-size:10.8px;line-height:10.8px;color:#545454;transform:scaleX(1.0111);left:1575.00px;transform-origin:0 0;">00:00:00</span>
<span class="t " style="top:248.86px;font-size:10.8px;line-height:10.8px;color:#545454;transform:scaleX(0.9908);left:1575.00px;transform-origin:0 0;">025 500 000</span>
<svg class="r" style="left:524px;top:276.5px;" width="10" height="12" viewBox="0 0 10 12" fill="none"><path d="M1.800 1.500l3.200 3.200L8.200 1.500M1.800 10.500l3.200-3.200L8.200 10.500" stroke="#3a3a3a" stroke-width="1.500"/></svg>
<svg class="r" style="left:539px;top:275px;" width="15" height="15" viewBox="0 0 15 15" fill="none"><path d="M5 2h5.500M6 2v4.500l-1.800 2.300h7.100L9.500 6.500V2M7.800 9v4.500" stroke="#a0a0a0" stroke-width="1.300"/><path d="M2.500 1.500l10.500 12" stroke="#a0a0a0" stroke-width="1.200"/></svg>
<svg class="r" style="left:558px;top:276.5px;" width="11" height="12" viewBox="0 0 11 12" fill="none"><path d="M1.200 1.500h8.600L6.500 6v4.300H4.500V6z" stroke="#3a3a3a" stroke-width="1.500" stroke-linejoin="round"/></svg>
<svg class="r" style="left:579px;top:276px;" width="13" height="13" viewBox="0 0 13 13" fill="none"><circle cx="6.500" cy="3.300" r="1.900" stroke="#3a3a3a" stroke-width="1.400"/><circle cx="2.900" cy="9.700" r="1.900" stroke="#3a3a3a" stroke-width="1.400"/><circle cx="10.100" cy="9.700" r="1.900" stroke="#3a3a3a" stroke-width="1.400"/></svg>
<span class="t " style="top:275.37px;font-size:13.5px;line-height:13.5px;color:#3a3a3a;transform:scaleX(0.9622);left:595.50px;transform-origin:0 0;-webkit-text-stroke:0.45px #3a3a3a;">Default Workspace</span>
<div class="r " style="left:520px;top:301.5px;width:1210px;height:45px;background:#f3f8f8;border-top:1px solid #d4d8e4"></div>
<div class="r " style="left:520px;top:771.5px;width:1210px;height:46px;background:#f3f8f8;border-top:1px solid #d4d8e4"></div>
<div class="r " style="left:804.5px;top:236px;width:1px;height:582px;background:#dfe0e8;"></div>
<div class="r " style="left:819.5px;top:236px;width:1px;height:582px;background:#e6e7ee;"></div>
<div class="r " style="left:1069.5px;top:236px;width:1px;height:582px;background:#e6e7ee;"></div>
<div class="r " style="left:1319.5px;top:236px;width:1px;height:582px;background:#e6e7ee;"></div>
<div class="r " style="left:1569.5px;top:236px;width:1px;height:582px;background:#e6e7ee;"></div>
<svg class="r" style="left:523px;top:306px;" width="12" height="10" viewBox="0 0 12 10" fill="none"><path d="M2.500 3l3.500 3.500L9.500 3" stroke="#3a3a3a" stroke-width="1.600"/></svg>
<span class="t " style="top:303.80px;font-size:15px;line-height:15px;color:#3d3d3d;transform:scaleX(0.9115);left:537.30px;transform-origin:0 0;">Process 175</span>
<div class="r " style="left:806px;top:330.5px;width:924px;height:16px;background:#e8552d;"></div>
<div class="r " style="left:520px;top:346.5px;width:1210px;height:21px;background:#252e3b;"></div>
<svg class="r" style="left:523px;top:351px;" width="12" height="10" viewBox="0 0 12 10" fill="none"><path d="M2.500 7.500L6 4l3.500 3.500" stroke="#ffffff" stroke-width="1.600"/></svg>
<span class="t " style="top:350.00px;font-size:15px;line-height:15px;color:#ffffff;transform:scaleX(0.8996);left:537.30px;transform-origin:0 0;">Process 0</span>
<div class="r " style="left:520px;top:367px;width:8.5px;height:404.5px;background:#252e3b;"></div>
<div class="r " style="left:528.5px;top:413.5px;width:1201.5px;height:1px;background:#e6e7ee;"></div>
<span class="t " style="top:369.80px;font-size:15px;line-height:15px;color:#3d3d3d;transform:scaleX(0.9314);left:532.50px;transform-origin:0 0;">stream 7 7</span>
<div class="r " style="left:528.5px;top:441.0px;width:1201.5px;height:1px;background:#e6e7ee;"></div>
<span class="t " style="top:418.50px;font-size:15px;line-height:15px;color:#3d3d3d;transform:scaleX(0.9306);left:532.50px;transform-origin:0 0;">stream 107 107</span>
<div class="r " style="left:528.5px;top:468.5px;width:1201.5px;height:1px;background:#e6e7ee;"></div>
<div class="r" style="left:539px;top:448.0px;width:41px;height:7.5px;border-left:1.2px solid #6a6a6a;border-bottom:1.2px solid #6a6a6a"></div>
<span class="t " style="top:446.40px;font-size:15px;line-height:15px;color:#3d3d3d;transform:scaleX(0.9501);left:584.00px;transform-origin:0 0;">duration diffs 1007</span>
<div class="r " style="left:528.5px;top:496.0px;width:1201.5px;height:1px;background:#e6e7ee;"></div>
<div class="r" style="left:539px;top:475.5px;width:41px;height:7.5px;border-left:1.2px solid #6a6a6a;border-bottom:1.2px solid #6a6a6a"></div>
<span class="t " style="top:473.90px;font-size:15px;line-height:15px;color:#3d3d3d;transform:scaleX(0.9588);left:584.00px;transform-origin:0 0;">duration diffs 1107</span>
<div class="r " style="left:528.5px;top:523.5px;width:1201.5px;height:1px;background:#e6e7ee;"></div>
<div class="r" style="left:539px;top:503.0px;width:41px;height:7.5px;border-left:1.2px solid #6a6a6a;border-bottom:1.2px solid #6a6a6a"></div>
<span class="t " style="top:501.40px;font-size:15px;line-height:15px;color:#3d3d3d;transform:scaleX(0.9478);left:584.00px;transform-origin:0 0;">args diffs 2007</span>
<div class="r " style="left:528.5px;top:551.0px;width:1201.5px;height:1px;background:#e6e7ee;"></div>
<div class="r" style="left:539px;top:530.5px;width:41px;height:7.5px;border-left:1.2px solid #6a6a6a;border-bottom:1.2px solid #6a6a6a"></div>
<span class="t " style="top:528.90px;font-size:15px;line-height:15px;color:#3d3d3d;transform:scaleX(0.9478);left:584.00px;transform-origin:0 0;">args diffs 2107</span>
<div class="r " style="left:528.5px;top:578.5px;width:1201.5px;height:1px;background:#e6e7ee;"></div>
<div class="r" style="left:539px;top:558.0px;width:41px;height:7.5px;border-left:1.2px solid #6a6a6a;border-bottom:1.2px solid #6a6a6a"></div>
<span class="t " style="top:556.40px;font-size:15px;line-height:15px;color:#3d3d3d;transform:scaleX(0.9440);left:584.00px;transform-origin:0 0;">name diffs 3007</span>
<div class="r " style="left:528.5px;top:606.0px;width:1201.5px;height:1px;background:#e6e7ee;"></div>
<div class="r" style="left:539px;top:585.5px;width:41px;height:7.5px;border-left:1.2px solid #6a6a6a;border-bottom:1.2px solid #6a6a6a"></div>
<span class="t " style="top:583.90px;font-size:15px;line-height:15px;color:#3d3d3d;transform:scaleX(0.9440);left:584.00px;transform-origin:0 0;">name diffs 3107</span>
<div class="r " style="left:528.5px;top:633.5px;width:1201.5px;height:1px;background:#e6e7ee;"></div>
<div class="r" style="left:539px;top:613.0px;width:41px;height:7.5px;border-left:1.2px solid #6a6a6a;border-bottom:1.2px solid #6a6a6a"></div>
<span class="t " style="top:611.40px;font-size:15px;line-height:15px;color:#3d3d3d;transform:scaleX(0.9212);left:584.00px;transform-origin:0 0;">added 4007</span>
<div class="r " style="left:528.5px;top:661.0px;width:1201.5px;height:1px;background:#e6e7ee;"></div>
<div class="r" style="left:539px;top:640.5px;width:41px;height:7.5px;border-left:1.2px solid #6a6a6a;border-bottom:1.2px solid #6a6a6a"></div>
<span class="t " style="top:638.90px;font-size:15px;line-height:15px;color:#3d3d3d;transform:scaleX(0.9212);left:584.00px;transform-origin:0 0;">added 4107</span>
<div class="r " style="left:528.5px;top:688.5px;width:1201.5px;height:1px;background:#e6e7ee;"></div>
<div class="r" style="left:539px;top:668.0px;width:41px;height:7.5px;border-left:1.2px solid #6a6a6a;border-bottom:1.2px solid #6a6a6a"></div>
<span class="t " style="top:666.40px;font-size:15px;line-height:15px;color:#3d3d3d;transform:scaleX(0.9177);left:584.00px;transform-origin:0 0;">removed 5007</span>
<div class="r " style="left:528.5px;top:716.0px;width:1201.5px;height:1px;background:#e6e7ee;"></div>
<div class="r" style="left:539px;top:695.5px;width:41px;height:7.5px;border-left:1.2px solid #6a6a6a;border-bottom:1.2px solid #6a6a6a"></div>
<span class="t " style="top:693.90px;font-size:15px;line-height:15px;color:#3d3d3d;transform:scaleX(0.9177);left:584.00px;transform-origin:0 0;">removed 5107</span>
<div class="r " style="left:528.5px;top:743.5px;width:1201.5px;height:1px;background:#e6e7ee;"></div>
<div class="r" style="left:539px;top:723.0px;width:41px;height:7.5px;border-left:1.2px solid #6a6a6a;border-bottom:1.2px solid #6a6a6a"></div>
<span class="t " style="top:721.40px;font-size:15px;line-height:15px;color:#3d3d3d;transform:scaleX(0.9386);left:584.00px;transform-origin:0 0;">comparison 6007</span>
<div class="r " style="left:528.5px;top:771.0px;width:1201.5px;height:1px;background:#e6e7ee;"></div>
<div class="r" style="left:539px;top:750.5px;width:41px;height:7.5px;border-left:1.2px solid #6a6a6a;border-bottom:1.2px solid #6a6a6a"></div>
<span class="t " style="top:748.90px;font-size:15px;line-height:15px;color:#3d3d3d;transform:scaleX(0.9386);left:584.00px;transform-origin:0 0;">comparison 6107</span>
<svg class="r" style="left:523px;top:777px;" width="12" height="10" viewBox="0 0 12 10" fill="none"><path d="M2.500 3l3.500 3.500L9.500 3" stroke="#3a3a3a" stroke-width="1.600"/></svg>
<span class="t " style="top:775.10px;font-size:15px;line-height:15px;color:#3d3d3d;transform:scaleX(0.9194);left:537.30px;transform-origin:0 0;">Process 59075</span>
<div class="r " style="left:805.5px;top:370.5px;width:852.5px;height:20.5px;background:#b98a3d;"></div>
<span class="t " style="top:374.67px;font-size:12.5px;line-height:12.5px;color:#ffffff;transform:scaleX(0.9414);left:1161.75px;transform-origin:0 0;-webkit-text-stroke:0.25px #ffffff;">execute_new_0_cached_5</span>
<div class="r " style="left:1659.5px;top:370.5px;width:2.5px;height:20.5px;background:#52c24f;"></div>
<div class="r " style="left:1662px;top:370.5px;width:4.400000000000091px;height:20.5px;background:#6e7a3c;"></div>
<div class="r " style="left:1666.4px;top:370.5px;width:27.59999999999991px;height:20.5px;background:#2f7780;"></div>
<span class="t " style="top:374.67px;font-size:12.5px;line-height:12.5px;color:#ffffff;transform:scaleX(0.8468);left:1670.20px;transform-origin:0 0;-webkit-text-stroke:0.25px #ffffff;">vo...</span>
<div class="r " style="left:1694px;top:370.5px;width:3px;height:20.5px;background:#6a6a30;"></div>
<div class="r " style="left:1697px;top:370.5px;width:4px;height:20.5px;background:#3f8f8f;"></div>
<div class="r " style="left:1701px;top:370.5px;width:7px;height:20.5px;background:#8e82e8;"></div>
<div class="r " style="left:1708px;top:370.5px;width:3px;height:20.5px;background:#e08aa8;"></div>
<div class="r " style="left:1712.3px;top:370.5px;width:2.0px;height:20.5px;background:#e58ba0;"></div>
<div class="r " style="left:805.5px;top:391px;width:686.5px;height:21px;background:#2f7780;"></div>
<div class="r " style="left:805.5px;top:391px;width:2.5px;height:21px;background:#a070d8;"></div>
<div class="r " style="left:808px;top:391px;width:44px;height:21px;background:#2f7780;"></div>
<span class="t " style="top:395.42px;font-size:12.5px;line-height:12.5px;color:#ffffff;transform:scaleX(0.8500);left:813.76px;transform-origin:0 0;-webkit-text-stroke:0.25px #ffffff;">_mat...</span>
<div class="r " style="left:852px;top:391px;width:8px;height:21px;background:#b0156e;"></div>
<div class="r " style="left:860px;top:391px;width:32px;height:21px;background:#2f7780;"></div>
<span class="t " style="top:395.42px;font-size:12.5px;line-height:12.5px;color:#ffffff;transform:scaleX(0.8500);left:864.19px;transform-origin:0 0;-webkit-text-stroke:0.25px #ffffff;">_m...</span>
<div class="r " style="left:892px;top:391px;width:51px;height:21px;background:#2f7780;"></div>
<span class="t " style="top:395.42px;font-size:12.5px;line-height:12.5px;color:#ffffff;transform:scaleX(0.8500);left:899.49px;transform-origin:0 0;-webkit-text-stroke:0.25px #ffffff;">_redu...</span>
<div class="r " style="left:943px;top:391px;width:1.0499999999999545px;height:21px;background:#b8c8f0;"></div>
<div class="r " style="left:944.05px;top:391px;width:4.44500000000005px;height:21px;background:#f2a090;"></div>
<div class="r " style="left:948.495px;top:391px;width:3.5px;height:21px;background:#c060d8;"></div>
<div class="r " style="left:951.995px;top:391px;width:1.9950000000000045px;height:21px;background:#3fae76;"></div>
<div class="r " style="left:953.99px;top:391px;width:6.019999999999982px;height:21px;background:#fdfdfe;"></div>
<div class="r " style="left:960.01px;top:391px;width:7.980000000000018px;height:21px;background:#b07a38;"></div>
<div class="r " style="left:967.99px;top:391px;width:4.024999999999977px;height:21px;background:#7aa0e8;"></div>
<div class="r " style="left:972.015px;top:391px;width:2.9750000000000227px;height:21px;background:#d0b0b8;"></div>
<div class="r " style="left:974.99px;top:391px;width:3.009999999999991px;height:21px;background:#a878e8;"></div>
<div class="r " style="left:978px;top:391px;width:33px;height:21px;background:#2f7780;"></div>
<span class="t " style="top:395.42px;font-size:12.5px;line-height:12.5px;color:#ffffff;transform:scaleX(0.8500);left:982.69px;transform-origin:0 0;-webkit-text-stroke:0.25px #ffffff;">_m...</span>
<div class="r " style="left:1011px;top:391px;width:8px;height:21px;background:#b0156e;"></div>
<div class="r " style="left:1019px;top:391px;width:25px;height:21px;background:#2f7780;"></div>
<span class="t " style="top:395.42px;font-size:12.5px;line-height:12.5px;color:#ffffff;transform:scaleX(0.8500);left:1024.12px;transform-origin:0 0;-webkit-text-stroke:0.25px #ffffff;">_...</span>
<div class="r " style="left:1044px;top:391px;width:40px;height:21px;background:#2f7780;"></div>
<span class="t " style="top:395.42px;font-size:12.5px;line-height:12.5px;color:#ffffff;transform:scaleX(0.8500);left:1051.89px;transform-origin:0 0;-webkit-text-stroke:0.25px #ffffff;">_re...</span>
<div class="r " style="left:1084px;top:391px;width:0.9900000000000091px;height:21px;background:#b8c8f0;"></div>
<div class="r " style="left:1084.99px;top:391px;width:4.191000000000031px;height:21px;background:#f2a090;"></div>
<div class="r " style="left:1089.181px;top:391px;width:3.2999999999999545px;height:21px;background:#c060d8;"></div>
<div class="r " style="left:1092.481px;top:391px;width:1.8810000000000855px;height:21px;background:#3fae76;"></div>
<div class="r " style="left:1094.362px;top:391px;width:5.675999999999931px;height:21px;background:#fdfdfe;"></div>
<div class="r " style="left:1100.038px;top:391px;width:7.523999999999887px;height:21px;background:#b07a38;"></div>
<div class="r " style="left:1107.562px;top:391px;width:3.7950000000000728px;height:21px;background:#7aa0e8;"></div>
<div class="r " style="left:1111.357px;top:391px;width:2.8050000000000637px;height:21px;background:#d0b0b8;"></div>
<div class="r " style="left:1114.162px;top:391px;width:2.8379999999999654px;height:21px;background:#a878e8;"></div>
<div class="r " style="left:1117px;top:391px;width:33px;height:21px;background:#2f7780;"></div>
<span class="t " style="top:395.42px;font-size:12.5px;line-height:12.5px;color:#ffffff;transform:scaleX(0.8500);left:1121.69px;transform-origin:0 0;-webkit-text-stroke:0.25px #ffffff;">_m...</span>
<div class="r " style="left:1150px;top:391px;width:8px;height:21px;background:#b0156e;"></div>
<div class="r " style="left:1158px;top:391px;width:25px;height:21px;background:#2f7780;"></div>
<span class="t " style="top:395.42px;font-size:12.5px;line-height:12.5px;color:#ffffff;transform:scaleX(0.8500);left:1163.12px;transform-origin:0 0;-webkit-text-stroke:0.25px #ffffff;">_...</span>
<div class="r " style="left:1183px;top:391px;width:41px;height:21px;background:#2f7780;"></div>
<span class="t " style="top:395.42px;font-size:12.5px;line-height:12.5px;color:#ffffff;transform:scaleX(0.8500);left:1191.39px;transform-origin:0 0;-webkit-text-stroke:0.25px #ffffff;">_re...</span>
<div class="r " style="left:1224.0px;top:391px;width:1.0650000000000546px;height:21px;background:#b8c8f0;"></div>
<div class="r " style="left:1225.065px;top:391px;width:4.508499999999913px;height:21px;background:#f2a090;"></div>
<div class="r " style="left:1229.5735px;top:391px;width:3.5499999999999545px;height:21px;background:#c060d8;"></div>
<div class="r " style="left:1233.1235px;top:391px;width:2.0235000000000127px;height:21px;background:#3fae76;"></div>
<div class="r " style="left:1235.147px;top:391px;width:6.1059999999999945px;height:21px;background:#fdfdfe;"></div>
<div class="r " style="left:1241.253px;top:391px;width:8.094000000000051px;height:21px;background:#b07a38;"></div>
<div class="r " style="left:1249.347px;top:391px;width:4.082499999999982px;height:21px;background:#7aa0e8;"></div>
<div class="r " style="left:1253.4295px;top:391px;width:3.0175000000001546px;height:21px;background:#d0b0b8;"></div>
<div class="r " style="left:1256.4470000000001px;top:391px;width:3.0529999999998836px;height:21px;background:#a878e8;"></div>
<div class="r " style="left:1259.5px;top:391px;width:32.0px;height:21px;background:#2f7780;"></div>
<span class="t " style="top:395.42px;font-size:12.5px;line-height:12.5px;color:#ffffff;transform:scaleX(0.8500);left:1263.69px;transform-origin:0 0;-webkit-text-stroke:0.25px #ffffff;">_m...</span>
<div class="r " style="left:1291.5px;top:391px;width:6.5px;height:21px;background:#b0156e;"></div>
<div class="r " style="left:1298px;top:391px;width:23px;height:21px;background:#2f7780;"></div>
<span class="t " style="top:395.42px;font-size:12.5px;line-height:12.5px;color:#ffffff;transform:scaleX(0.8500);left:1302.12px;transform-origin:0 0;-webkit-text-stroke:0.25px #ffffff;">_...</span>
<div class="r " style="left:1321px;top:391px;width:36.5px;height:21px;background:#2f7780;"></div>
<span class="t " style="top:395.42px;font-size:12.5px;line-height:12.5px;color:#ffffff;transform:scaleX(0.8500);left:1327.14px;transform-origin:0 0;-webkit-text-stroke:0.25px #ffffff;">_re...</span>
<div class="r " style="left:1357.5px;top:391px;width:1.0199999999999818px;height:21px;background:#b8c8f0;"></div>
<div class="r " style="left:1358.52px;top:391px;width:4.317999999999984px;height:21px;background:#f2a090;"></div>
<div class="r " style="left:1362.838px;top:391px;width:3.400000000000091px;height:21px;background:#c060d8;"></div>
<div class="r " style="left:1366.238px;top:391px;width:1.9379999999998745px;height:21px;background:#3fae76;"></div>
<div class="r " style="left:1368.176px;top:391px;width:5.847999999999956px;height:21px;background:#fdfdfe;"></div>
<div class="r " style="left:1374.024px;top:391px;width:7.75200000000018px;height:21px;background:#b07a38;"></div>
<div class="r " style="left:1381.776px;top:391px;width:3.9099999999998545px;height:21px;background:#7aa0e8;"></div>
<div class="r " style="left:1385.686px;top:391px;width:2.8900000000001px;height:21px;background:#d0b0b8;"></div>
<div class="r " style="left:1388.576px;top:391px;width:2.923999999999978px;height:21px;background:#a878e8;"></div>
<div class="r " style="left:1391.5px;top:391px;width:30.5px;height:21px;background:#2f7780;"></div>
<span class="t " style="top:395.42px;font-size:12.5px;line-height:12.5px;color:#ffffff;transform:scaleX(0.8500);left:1394.94px;transform-origin:0 0;-webkit-text-stroke:0.25px #ffffff;">_m...</span>
<div class="r " style="left:1422px;top:391px;width:8px;height:21px;background:#b0156e;"></div>
<div class="r " style="left:1430px;top:391px;width:22px;height:21px;background:#2f7780;"></div>
<span class="t " style="top:395.42px;font-size:12.5px;line-height:12.5px;color:#ffffff;transform:scaleX(0.8500);left:1433.62px;transform-origin:0 0;-webkit-text-stroke:0.25px #ffffff;">_...</span>
<div class="r " style="left:1452px;top:391px;width:35px;height:21px;background:#2f7780;"></div>
<span class="t " style="top:395.42px;font-size:12.5px;line-height:12.5px;color:#ffffff;transform:scaleX(0.8500);left:1460.64px;transform-origin:0 0;-webkit-text-stroke:0.25px #ffffff;">_r...</span>
<div class="r " style="left:1487px;top:391px;width:2.5px;height:21px;background:#a070d8;"></div>
<div class="r " style="left:1489.5px;top:391px;width:1.5px;height:21px;background:#8fc8c8;"></div>
<div class="r " style="left:1492.5px;top:391px;width:165.5px;height:21px;background:#f0a1a3;"></div>
<span class="t " style="top:395.42px;font-size:12.5px;line-height:12.5px;color:#2a1a1a;transform:scaleX(0.9320);left:1507.25px;transform-origin:0 0;-webkit-text-stroke:0.25px #2a1a1a;">nvjet_tst_512x8_64x3_2...</span>
<div class="r " style="left:953px;top:418.5px;width:7px;height:20px;background:#3fbf96;"></div>
<div class="r " style="left:1095px;top:418.5px;width:4px;height:20px;background:#d6c94c;"></div>
<div class="r " style="left:1235px;top:418.5px;width:6px;height:20px;background:#3fbf96;"></div>
<div class="r " style="left:1368px;top:418.5px;width:4px;height:20px;background:#d6c94c;"></div>
<div class="r " style="left:805.7px;top:446.0px;width:1.6000000000000227px;height:20px;background:#3a8a7c;"></div>
<div class="r " style="left:892.7px;top:446.0px;width:1.6000000000000227px;height:20px;background:#3a8a7c;"></div>
<div class="r " style="left:1043.7px;top:446.0px;width:1.599999999999909px;height:20px;background:#3a8a7c;"></div>
<div class="r " style="left:1183.2px;top:446.0px;width:1.599999999999909px;height:20px;background:#3a8a7c;"></div>
<div class="r " style="left:1320.8px;top:446.0px;width:1.599999999999909px;height:20px;background:#3a8a7c;"></div>
<div class="r " style="left:1452.2px;top:446.0px;width:1.599999999999909px;height:20px;background:#3a8a7c;"></div>
<div class="r " style="left:1487.6px;top:446.0px;width:1.2000000000000455px;height:20px;background:#3a8a7c;"></div>
<div class="r " style="left:1488.8px;top:446.0px;width:1.400000000000091px;height:20px;background:#e8a0a8;"></div>
<div class="r " style="left:941.3px;top:446.0px;width:6.900000000000091px;height:20px;background:#3a8a7c;"></div>
<div class="r " style="left:948.2px;top:446.0px;width:2.2999999999999545px;height:20px;background:#9fb5ad;"></div>
<div class="r " style="left:951px;top:446.0px;width:3.5px;height:20px;background:#cfd6d4;"></div>
<div class="r " style="left:960px;top:446.0px;width:8.5px;height:20px;background:#3a8a7c;"></div>
<div class="r " style="left:968.5px;top:446.0px;width:1.1000000000000227px;height:20px;background:#eea0aa;"></div>
<div class="r " style="left:972px;top:446.0px;width:4.5px;height:20px;background:#3a8a7c;"></div>
<div class="r " style="left:1082.5px;top:446.0px;width:10.700000000000045px;height:20px;background:#3a8a7c;"></div>
<div class="r " style="left:1093.2px;top:446.0px;width:2.7999999999999545px;height:20px;background:#d890c0;"></div>
<div class="r " style="left:1100.5px;top:446.0px;width:5.7999999999999545px;height:20px;background:#3a8a7c;"></div>
<div class="r " style="left:1107.5px;top:446.0px;width:7.5px;height:20px;background:#3a8a7c;"></div>
<div class="r " style="left:1115px;top:446.0px;width:2.5px;height:20px;background:#eea0aa;"></div>
<div class="r " style="left:1222.6px;top:446.0px;width:3.400000000000091px;height:20px;background:#eea0aa;"></div>
<div class="r " style="left:1226px;top:446.0px;width:7px;height:20px;background:#3a8a7c;"></div>
<div class="r " style="left:1233px;top:446.0px;width:2.5px;height:20px;background:#eea0aa;"></div>
<div class="r " style="left:1242px;top:446.0px;width:6.599999999999909px;height:20px;background:#3a8a7c;"></div>
<div class="r " style="left:1248.6px;top:446.0px;width:1.0px;height:20px;background:#8fc8b8;"></div>
<div class="r " style="left:1249.6px;top:446.0px;width:4.100000000000136px;height:20px;background:#3a8a7c;"></div>
<div class="r " style="left:1253.7px;top:446.0px;width:2.2999999999999545px;height:20px;background:#eea0aa;"></div>
<div class="r " style="left:1356.3px;top:446.0px;width:2.2000000000000455px;height:20px;background:#eea0aa;"></div>
<div class="r " style="left:1358.5px;top:446.0px;width:5.5px;height:20px;background:#3a8a7c;"></div>
<div class="r " style="left:1365.5px;top:446.0px;width:4.099999999999909px;height:20px;background:#3a8a7c;"></div>
<div class="r " style="left:1374px;top:446.0px;width:6px;height:20px;background:#3a8a7c;"></div>
<div class="r " style="left:1380px;top:446.0px;width:3px;height:20px;background:#eea0aa;"></div>
<div class="r " style="left:1383.8px;top:446.0px;width:3.7000000000000455px;height:20px;background:#3a8a7c;"></div>
<div class="r " style="left:1387.5px;top:446.0px;width:2.0px;height:20px;background:#eea0aa;"></div>
<div class="r " style="left:1659px;top:446.0px;width:6.5px;height:20px;background:#f0a0b0;"></div>
<div class="r " style="left:1665.5px;top:446.0px;width:27.5px;height:20px;background:#3a8a7c;"></div>
<span class="t " style="top:449.92px;font-size:12.5px;line-height:12.5px;color:#ffffff;transform:scaleX(0.7724);left:1668.25px;transform-origin:0 0;-webkit-text-stroke:0.25px #ffffff;">1%...</span>
<div class="r " style="left:1697.5px;top:446.0px;width:2.7000000000000455px;height:20px;background:#3a8a7c;"></div>
<div class="r " style="left:1707.6px;top:446.0px;width:2.0px;height:20px;background:#8a9a98;"></div>
<div class="r " style="left:953px;top:473.5px;width:6.5px;height:20px;background:#3a8a7c;"></div>
<div class="r " style="left:1235px;top:473.5px;width:6px;height:20px;background:#3a8a7c;"></div>
<div class="r " style="left:1368px;top:473.5px;width:4px;height:20px;background:#3a8a7c;"></div>
<div class="r " style="left:893px;top:501.0px;width:48px;height:20px;background:#c026d3;"></div>
<span class="t " style="top:504.92px;font-size:12.5px;line-height:12.5px;color:#ffffff;transform:scaleX(0.8500);left:898.99px;transform-origin:0 0;-webkit-text-stroke:0.25px #ffffff;">_redu...</span>
<div class="r " style="left:1044px;top:501.0px;width:38.5px;height:20px;background:#c026d3;"></div>
<span class="t " style="top:504.92px;font-size:12.5px;line-height:12.5px;color:#ffffff;transform:scaleX(0.8500);left:1051.14px;transform-origin:0 0;-webkit-text-stroke:0.25px #ffffff;">_re...</span>
<div class="r " style="left:1183px;top:501.0px;width:39px;height:20px;background:#c026d3;"></div>
<span class="t " style="top:504.92px;font-size:12.5px;line-height:12.5px;color:#ffffff;transform:scaleX(0.8500);left:1190.39px;transform-origin:0 0;-webkit-text-stroke:0.25px #ffffff;">_re...</span>
<div class="r " style="left:1321px;top:501.0px;width:36px;height:20px;background:#c026d3;"></div>
<span class="t " style="top:504.92px;font-size:12.5px;line-height:12.5px;color:#ffffff;transform:scaleX(0.8500);left:1326.89px;transform-origin:0 0;-webkit-text-stroke:0.25px #ffffff;">_re...</span>
<div class="r " style="left:1452px;top:501.0px;width:33px;height:20px;background:#c026d3;"></div>
<span class="t " style="top:504.92px;font-size:12.5px;line-height:12.5px;color:#ffffff;transform:scaleX(0.8500);left:1459.64px;transform-origin:0 0;-webkit-text-stroke:0.25px #ffffff;">_r...</span>
<div class="r " style="left:807px;top:556.0px;width:45px;height:20px;background:#2f8a2c;"></div>
<span class="t " style="top:559.92px;font-size:12.5px;line-height:12.5px;color:#ffffff;transform:scaleX(0.8500);left:813.26px;transform-origin:0 0;-webkit-text-stroke:0.25px #ffffff;">_mat...</span>
<div class="r " style="left:852px;top:556.0px;width:8px;height:20px;background:#b491e6;"></div>
<div class="r " style="left:978px;top:556.0px;width:33px;height:20px;background:#2f8a2c;"></div>
<span class="t " style="top:559.92px;font-size:12.5px;line-height:12.5px;color:#ffffff;transform:scaleX(0.8500);left:982.69px;transform-origin:0 0;-webkit-text-stroke:0.25px #ffffff;">_m...</span>
<div class="r " style="left:1011px;top:556.0px;width:8px;height:20px;background:#b491e6;"></div>
<div class="r " style="left:1117px;top:556.0px;width:33px;height:20px;background:#2f8a2c;"></div>
<span class="t " style="top:559.92px;font-size:12.5px;line-height:12.5px;color:#ffffff;transform:scaleX(0.8500);left:1121.69px;transform-origin:0 0;-webkit-text-stroke:0.25px #ffffff;">_m...</span>
<div class="r " style="left:1150px;top:556.0px;width:8px;height:20px;background:#b491e6;"></div>
<div class="r " style="left:1259px;top:556.0px;width:32px;height:20px;background:#2f8a2c;"></div>
<span class="t " style="top:559.92px;font-size:12.5px;line-height:12.5px;color:#ffffff;transform:scaleX(0.8500);left:1263.19px;transform-origin:0 0;-webkit-text-stroke:0.25px #ffffff;">_m...</span>
<div class="r " style="left:1291px;top:556.0px;width:7px;height:20px;background:#b491e6;"></div>
<div class="r " style="left:1391px;top:556.0px;width:31px;height:20px;background:#2f8a2c;"></div>
<span class="t " style="top:559.92px;font-size:12.5px;line-height:12.5px;color:#ffffff;transform:scaleX(0.8500);left:1394.69px;transform-origin:0 0;-webkit-text-stroke:0.25px #ffffff;">_m...</span>
<div class="r " style="left:1422px;top:556.0px;width:8px;height:20px;background:#b491e6;"></div>
<div class="r " style="left:860px;top:666.0px;width:32.5px;height:20px;background:#2a6a72;"></div>
<span class="t " style="top:669.92px;font-size:12.5px;line-height:12.5px;color:#ffffff;transform:scaleX(0.8500);left:864.44px;transform-origin:0 0;-webkit-text-stroke:0.25px #ffffff;">_m...</span>
<div class="r " style="left:1019px;top:666.0px;width:25.5px;height:20px;background:#2a6a72;"></div>
<span class="t " style="top:669.92px;font-size:12.5px;line-height:12.5px;color:#ffffff;transform:scaleX(0.8500);left:1024.37px;transform-origin:0 0;-webkit-text-stroke:0.25px #ffffff;">_...</span>
<div class="r " style="left:1158px;top:666.0px;width:25.5px;height:20px;background:#2a6a72;"></div>
<span class="t " style="top:669.92px;font-size:12.5px;line-height:12.5px;color:#ffffff;transform:scaleX(0.8500);left:1163.37px;transform-origin:0 0;-webkit-text-stroke:0.25px #ffffff;">_...</span>
<div class="r " style="left:1298px;top:666.0px;width:23px;height:20px;background:#2a6a72;"></div>
<span class="t " style="top:669.92px;font-size:12.5px;line-height:12.5px;color:#ffffff;transform:scaleX(0.8500);left:1302.12px;transform-origin:0 0;-webkit-text-stroke:0.25px #ffffff;">_...</span>
<div class="r " style="left:1430px;top:666.0px;width:22.5px;height:20px;background:#2a6a72;"></div>
<span class="t " style="top:669.92px;font-size:12.5px;line-height:12.5px;color:#ffffff;transform:scaleX(0.8500);left:1433.87px;transform-origin:0 0;-webkit-text-stroke:0.25px #ffffff;">_...</span>
<div class="r " style="left:805.5px;top:721.0px;width:12.5px;height:20px;background:#357b8c;"></div>
<span class="t " style="top:724.92px;font-size:12.5px;line-height:12.5px;color:#ffffff;transform:scaleX(0.9600);left:808.75px;transform-origin:0 0;-webkit-text-stroke:0.25px #ffffff;">v</span>
<div class="r " style="left:818px;top:721.0px;width:2px;height:20px;background:#8a6a2a;"></div>
<div class="r " style="left:820px;top:721.0px;width:2.5px;height:20px;background:#6f7a3a;"></div>
<div class="r " style="left:825.5px;top:721.0px;width:6.5px;height:20px;background:#8b84e6;"></div>
<div class="r " style="left:833px;top:721.0px;width:3px;height:20px;background:#e58ad0;"></div>
<div class="r " style="left:1376.8px;top:721.0px;width:1.400000000000091px;height:20px;background:#f0a098;"></div>
<div class="r " style="left:1444.8px;top:721.0px;width:1.2000000000000455px;height:20px;background:#a8a8a8;"></div>
<div class="r " style="left:1451.8px;top:721.0px;width:1.2000000000000455px;height:20px;background:#78a8e8;"></div>
<div class="r " style="left:1496.8px;top:721.0px;width:1.2000000000000455px;height:20px;background:#a8a8a8;"></div>
<div class="r " style="left:1503.8px;top:721.0px;width:1.2000000000000455px;height:20px;background:#78a8e8;"></div>
<div class="r " style="left:520px;top:993px;width:1210px;height:35px;background:#ececef;border-top:1px solid #d0d2e4"></div>
<div class="r " style="left:532.5px;top:1007px;width:2px;height:2px;background:#4a4a4a;border-radius:50%"></div>
<div class="r " style="left:532.5px;top:1011px;width:2px;height:2px;background:#4a4a4a;border-radius:50%"></div>
<div class="r " style="left:532.5px;top:1015px;width:2px;height:2px;background:#4a4a4a;border-radius:50%"></div>
<div class="r " style="left:552px;top:998px;width:130px;height:30px;background:#fdfdfd;border-radius:3px 3px 0 0;box-shadow:0 0 2px rgba(0,0,0,.25)"></div>
<span class="t " style="top:1006.23px;font-size:14.5px;line-height:14.5px;color:#3a3a3a;transform:scaleX(0.9640);left:563.00px;transform-origin:0 0;">Current Selection</span>
<svg class="r" style="left:1682.3px;top:1004px;" width="14" height="14" viewBox="0 0 14 14" fill="none"><path d="M2 2.700h10M7 12.800V6M4.200 8.300L7 5.500l2.800 2.800" stroke="#3c3c3c" stroke-width="1.500"/></svg>
<svg class="r" style="left:1709.7px;top:1006.5px;" width="12" height="10" viewBox="0 0 12 10" fill="none"><path d="M2.500 7L6 3.500 9.500 7" stroke="#3c3c3c" stroke-width="1.600"/></svg>
<div class="r " style="left:520px;top:1028px;width:1210px;height:28px;background:#252e3b;"></div>
<svg class="r" style="left:539.5px;top:1036px;" width="13" height="13" viewBox="0 0 13 13" fill="none"><path d="M4.800 1.200C1.600 3.200 1.600 8 4 10.300M1 10.600h3.300V7.300M8.200 11.800C11.400 9.800 11.400 5 9 2.700M12 2.400H8.700v3.300" stroke="#ffffff" stroke-width="1.500"/></svg>
<span class="t " style="top:1034.73px;font-size:14.5px;line-height:14.5px;color:#ffffff;transform:scaleX(0.9556);left:562.00px;transform-origin:0 0;-webkit-text-stroke:0.3px #fff;">Timeline Sync</span>
<svg class="r" style="left:1362.4px;top:553px;" width="11.5" height="18" viewBox="0 0 14 22" fill="none"><path d="M1.500 1.500v15.500l3.800-3.600 2.600 6 2.300-1-2.600-5.800h5.200z" fill="#0a0a0a" stroke="#fff" stroke-width="1"/></svg>
</body></html>
